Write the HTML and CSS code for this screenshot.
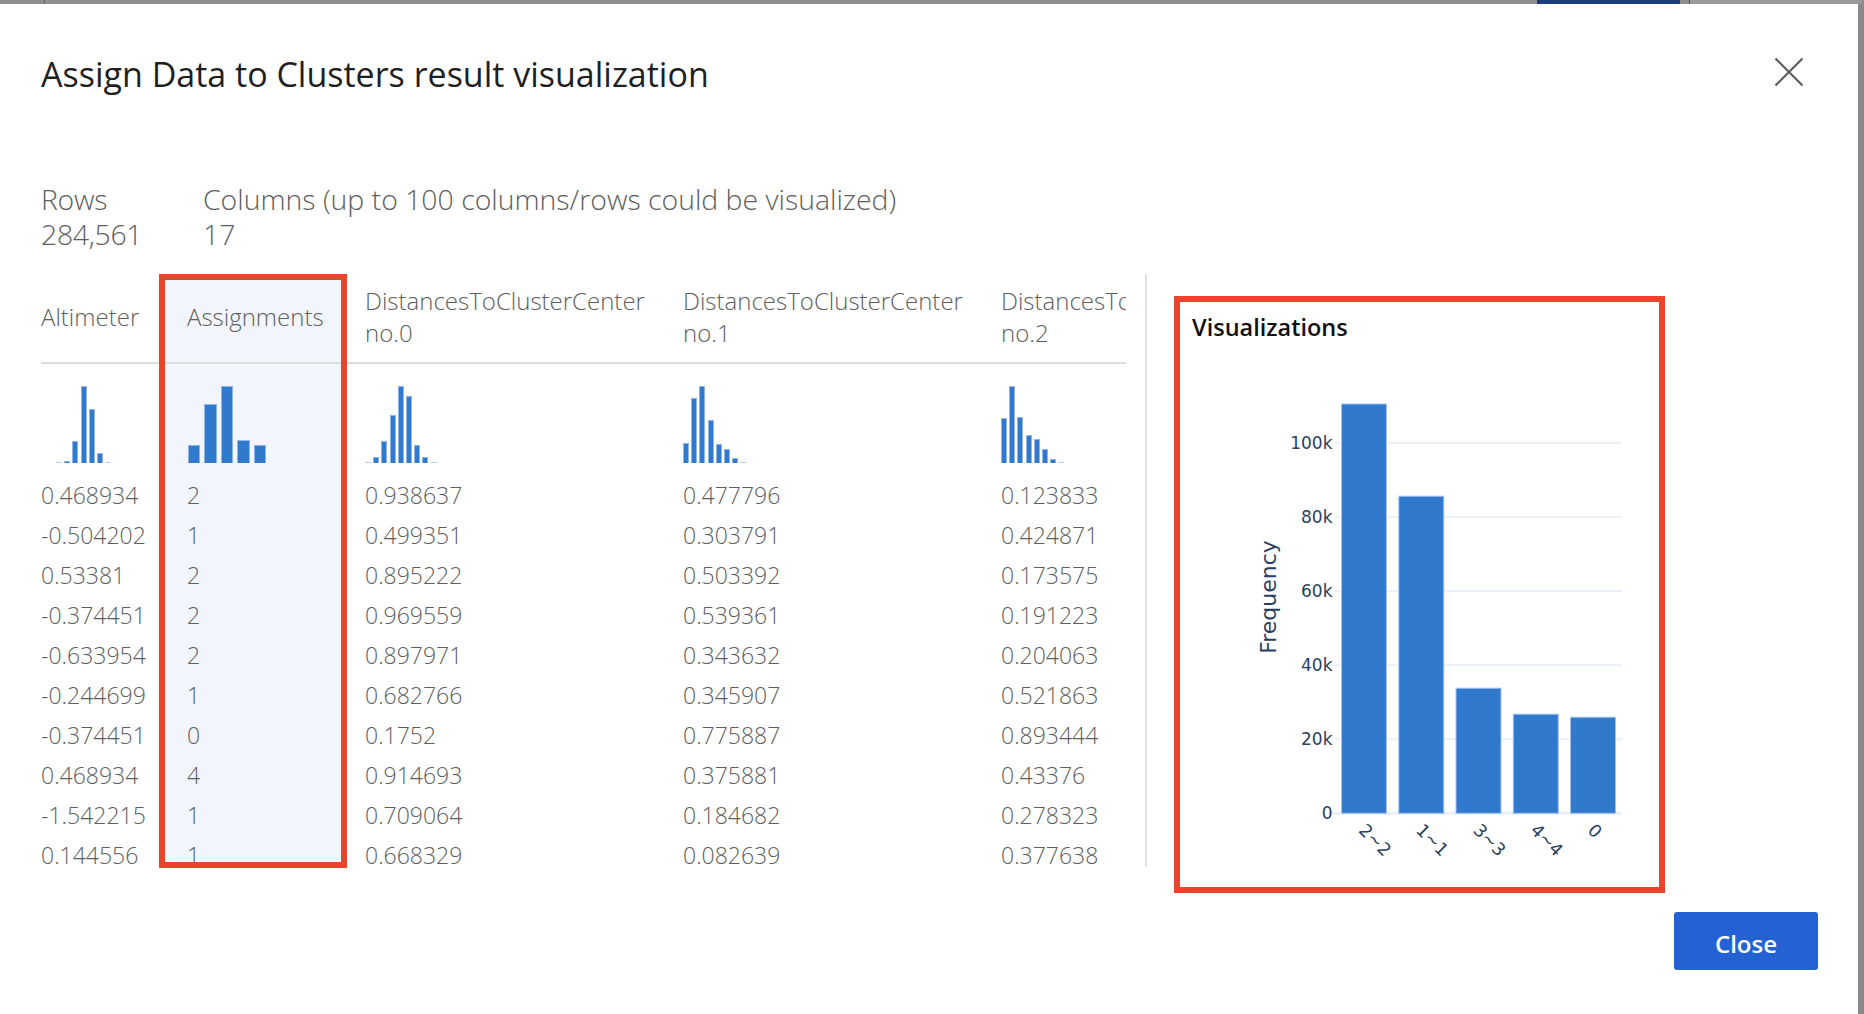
FILE: index.html
```html
<!DOCTYPE html>
<html lang="en">
<head>
<meta charset="utf-8">
<title>Assign Data to Clusters result visualization</title>
<link rel="stylesheet" href="styles.css">
</head>
<body>
<div class="backdrop-top"><span class="bt-tick"></span><span class="bt-blue"></span><span class="bt-box"></span></div>
<div class="stage">
  <div class="dialog">
    <div class="dlg-header">
      <h1 class="dlg-title">Assign Data to Clusters result visualization</h1>
      <button class="icon-close" aria-label="Close">
        <svg width="30" height="30" viewBox="0 0 30 30"><path d="M1.5 1.5L28.5 28.5M28.5 1.5L1.5 28.5" stroke="#5c5c5c" stroke-width="2.2" fill="none"/></svg>
      </button>
    </div>

    <div class="stats">
      <div class="stat stat-rows"><div>Rows</div><div>284,561</div></div>
      <div class="stat"><div>Columns (up to 100 columns/rows could be visualized)</div><div>17</div></div>
    </div>

    <div class="main">
      <div class="table-wrap">
        <div class="col col-first">
          <div class="col-head">Altimeter</div>
          <div class="histo narrow off-15">
            <i class="bar zero"></i><i class="bar" style="height:2.3px"></i><i class="bar" style="height:21.7px"></i><i class="bar" style="height:76.7px"></i><i class="bar" style="height:54px"></i><i class="bar" style="height:9.7px"></i><i class="bar zero"></i>
          </div>
          <div class="cells">
            <div>0.468934</div><div>-0.504202</div><div>0.53381</div><div>-0.374451</div><div>-0.633954</div><div>-0.244699</div><div>-0.374451</div><div>0.468934</div><div>-1.542215</div><div>0.144556</div>
          </div>
        </div>

        <div class="col col-selected">
          <div class="col-head">Assignments</div>
          <div class="histo wide off-1">
            <i class="bar" style="height:17.7px"></i><i class="bar" style="height:59.3px"></i><i class="bar" style="height:76.7px"></i><i class="bar" style="height:23px"></i><i class="bar" style="height:18px"></i>
          </div>
          <div class="cells">
            <div>2</div><div>1</div><div>2</div><div>2</div><div>2</div><div>1</div><div>0</div><div>4</div><div>1</div><div>1</div>
          </div>
        </div>

        <div class="col col-dist">
          <div class="col-head">DistancesToClusterCenter no.0</div>
          <div class="histo narrow">
            <i class="bar zero"></i><i class="bar" style="height:6.3px"></i><i class="bar" style="height:21.7px"></i><i class="bar" style="height:48.3px"></i><i class="bar" style="height:76.7px"></i><i class="bar" style="height:66.7px"></i><i class="bar" style="height:17.7px"></i><i class="bar" style="height:6.3px"></i><i class="bar zero"></i>
          </div>
          <div class="cells">
            <div>0.938637</div><div>0.499351</div><div>0.895222</div><div>0.969559</div><div>0.897971</div><div>0.682766</div><div>0.1752</div><div>0.914693</div><div>0.709064</div><div>0.668329</div>
          </div>
        </div>

        <div class="col col-dist">
          <div class="col-head">DistancesToClusterCenter no.1</div>
          <div class="histo narrow">
            <i class="bar" style="height:19.7px"></i><i class="bar" style="height:64.7px"></i><i class="bar" style="height:76.7px"></i><i class="bar" style="height:43.3px"></i><i class="bar" style="height:19px"></i><i class="bar" style="height:14px"></i><i class="bar" style="height:5.3px"></i><i class="bar zero"></i>
          </div>
          <div class="cells">
            <div>0.477796</div><div>0.303791</div><div>0.503392</div><div>0.539361</div><div>0.343632</div><div>0.345907</div><div>0.775887</div><div>0.375881</div><div>0.184682</div><div>0.082639</div>
          </div>
        </div>

        <div class="col col-dist">
          <div class="col-head">DistancesToClusterCenter no.2</div>
          <div class="histo narrow">
            <i class="bar" style="height:44.7px"></i><i class="bar" style="height:76.7px"></i><i class="bar" style="height:45.7px"></i><i class="bar" style="height:27.7px"></i><i class="bar" style="height:24.3px"></i><i class="bar" style="height:13.7px"></i><i class="bar" style="height:4.3px"></i><i class="bar zero"></i>
          </div>
          <div class="cells">
            <div>0.123833</div><div>0.424871</div><div>0.173575</div><div>0.191223</div><div>0.204063</div><div>0.521863</div><div>0.893444</div><div>0.43376</div><div>0.278323</div><div>0.377638</div>
          </div>
        </div>
      </div>

      <div class="vdivider"></div>

      <section class="viz">
        <h2 class="viz-title">Visualizations</h2>
        <svg class="chart" width="478" height="545" viewBox="0 0 478 545">
          <g class="grid">
            <rect x="148" y="469.8" width="294" height="3"/>
            <rect x="155" y="396.2" width="287" height="2"/>
            <rect x="155" y="322.1" width="287" height="2"/>
            <rect x="155" y="248" width="287" height="2"/>
            <rect x="155" y="173.9" width="287" height="2"/>
            <rect x="155" y="99.8" width="287" height="2"/>
          </g>
          <g class="ticks">
            <text x="152.5" y="471.3">0</text>
            <text x="152.5" y="397.2">20k</text>
            <text x="152.5" y="323.1">40k</text>
            <text x="152.5" y="249">60k</text>
            <text x="152.5" y="174.9">80k</text>
            <text x="152.5" y="100.8">100k</text>
          </g>
          <g class="bars">
            <rect x="161.5" y="62" width="45" height="409.3"/>
            <rect x="218.8" y="154.2" width="45" height="317.1"/>
            <rect x="276" y="346.2" width="45" height="125.1"/>
            <rect x="333.3" y="372.2" width="45" height="99.1"/>
            <rect x="390.5" y="375.2" width="45" height="96.1"/>
          </g>
          <text class="axis-title" transform="translate(88 255) rotate(-90)">Frequency</text>
          <g class="xlabels">
            <text transform="translate(182 485) rotate(45)">2~2</text>
            <text transform="translate(239.3 485) rotate(45)">1~1</text>
            <text transform="translate(296.5 485) rotate(45)">3~3</text>
            <text transform="translate(353.8 485) rotate(45)">4~4</text>
            <text transform="translate(411 485) rotate(45)">0</text>
          </g>
        </svg>
      </section>
    </div>

    <div class="dlg-footer">
      <button class="btn-primary">Close</button>
    </div>
  </div>
  <div class="backdrop-right"></div>
</div>
</body>
</html>
```

FILE: styles.css
```css
* { box-sizing: border-box; }

html, body {
  margin: 0;
  padding: 0;
  width: 1864px;
  height: 1014px;
  overflow: hidden;
  background: #8b8b8b;
  font-family: "Open Sans", "Noto Sans", "Liberation Sans", sans-serif;
}

.backdrop-top {
  height: 4px;
  display: flex;
  background: #8e8e8e;
}
.bt-tick {
  width: 1px;
  margin-left: 44px;
  background: #6a6a6a;
}
.bt-blue {
  width: 143px;
  margin-left: 1492px;
  background: #1b3e7d;
}
.bt-box {
  width: 172px;
  margin-left: 9px;
  background: #9a9a9a;
  border-left: 1px solid #555;
}

.stage {
  display: flex;
  height: 1010px;
}

.dialog {
  width: 1858px;
  height: 1010px;
  background: #ffffff;
  display: flex;
  flex-direction: column;
  padding-left: 41px;
}

.backdrop-right {
  flex: 1;
  background: #8a8a8a;
}

/* header */
.dlg-header {
  display: flex;
  align-items: center;
  justify-content: space-between;
  height: 44px;
  margin-top: 48px;
  padding-right: 54px;
}
.dlg-title {
  margin: 0;
  font-size: 34px;
  line-height: 44px;
  font-weight: 400;
  color: #1f1f1f;
  letter-spacing: 0;
}
.icon-close {
  width: 30px;
  height: 30px;
  padding: 0;
  margin: 0 0 4px 0;
  border: 0;
  background: transparent;
  display: flex;
}

/* stats */
.stats {
  display: flex;
  margin-top: 86px;
  font-size: 28.4px;
  line-height: 35px;
  font-weight: 300;
  color: #5e5e5e;
}
.stat-rows { width: 162px; letter-spacing: -0.3px; }

/* main area */
.main {
  display: flex;
  align-items: flex-start;
  margin-top: 22px;
}

.table-wrap {
  width: 1085px;
  height: 595px;
  padding-top: 6px;
  overflow: hidden;
  display: flex;
  flex-shrink: 0;
}

.col {
  flex-shrink: 0;
  font-size: 23px;
  font-weight: 300;
  color: #5e5e5e;
}
.col-first { width: 124px; }
.col-selected {
  width: 176px;
  height: 582px;
  padding-left: 22px;
  background: #f2f5fb;
  overflow: hidden;
  outline: 6px solid #e8452c;
  position: relative;
  z-index: 1;
}
.col-dist {
  width: 318px;
  padding-left: 24px;
}

.col-head {
  height: 84px;
  padding-bottom: 8px;
  display: flex;
  align-items: center;
  font-size: 24px;
  line-height: 32px;
  border-bottom: 2px solid #dcdcdc;
  white-space: normal;
}
.col-selected .col-head { margin-left: -22px; padding-left: 22px; }
.col-dist .col-head { margin-left: -24px; padding-left: 24px; }

.histo {
  display: flex;
  align-items: flex-end;
  height: 76px;
  margin-top: 23px;
}
.histo.narrow { gap: 2.2px; }
.histo.wide { gap: 4.3px; }
.off-15 { margin-left: 15px; }
.off-1 { margin-left: 1px; }

.bar {
  display: block;
  background: #3179cd;
  border: 1px solid #8fb5ea;
  border-bottom: 0;
}
.narrow .bar { width: 6px; }
.wide .bar { width: 12.2px; }
.bar.zero {
  height: 1px;
  border: 0;
  background: #b9d0f0;
}

.cells {
  margin-top: 11.5px;
  line-height: 40px;
  white-space: nowrap;
}

.vdivider {
  width: 2px;
  height: 593px;
  margin-left: 19px;
  background: #e2e2e2;
  flex-shrink: 0;
}

/* visualization panel */
.viz {
  width: 491px;
  height: 597px;
  margin-top: 22px;
  margin-left: 27px;
  border: 6px solid #e8452c;
  flex-shrink: 0;
  display: flex;
  flex-direction: column;
}
.viz-title {
  margin: 0;
  padding: 10px 0 0 12px;
  font-size: 23.5px;
  line-height: 30px;
  font-weight: 600;
  color: #111111;
}
.chart { display: block; }
.grid rect { fill: #ebf0f8; }
.ticks text {
  font-family: "DejaVu Sans", Verdana, sans-serif;
  font-size: 17px;
  fill: #2a3f5f;
  text-anchor: end;
  dominant-baseline: central;
}
.bars rect {
  fill: #3179cd;
  stroke: #a3c2ee;
  stroke-width: 1;
}
.axis-title {
  font-family: "DejaVu Sans", Verdana, sans-serif;
  font-size: 22px;
  fill: #2a3f5f;
  text-anchor: middle;
  dominant-baseline: central;
}
.xlabels text {
  font-family: "DejaVu Sans", Verdana, sans-serif;
  font-size: 17.5px;
  fill: #2a3f5f;
  dominant-baseline: central;
}

/* footer */
.dlg-footer {
  display: flex;
  justify-content: flex-end;
  margin-top: 19px;
  padding-right: 40px;
}
.btn-primary {
  width: 144px;
  height: 58px;
  border: 0;
  border-radius: 3px;
  background: #2462d3;
  color: #ffffff;
  font-family: "Open Sans", "Noto Sans", sans-serif;
  font-size: 24px;
  line-height: 58px;
  font-weight: 600;
  padding: 3px 0 0 0;
}
```
